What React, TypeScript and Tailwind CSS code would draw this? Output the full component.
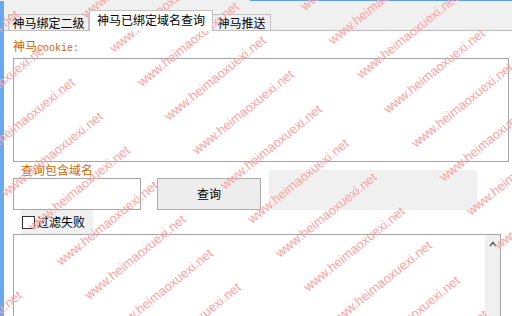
import React from 'react';

// watermark lattice, rotated grid of "www.heimaoxuexi.net"
const ANGLE = 39;
const STEP_ALONG = 175;
const STEP_ACROSS = 44;

const buildMarks = () => {
  const a = (ANGLE * Math.PI) / 180;
  const ux = Math.cos(a);
  const uy = -Math.sin(a);
  const nx = Math.sin(a);
  const ny = Math.cos(a);
  const out: { x: number; y: number }[] = [];
  for (let i = -5; i <= 5; i++) {
    for (let j = -14; j <= 14; j++) {
      const x = 326 + i * STEP_ALONG * ux + j * STEP_ACROSS * nx;
      const y = 215 + i * STEP_ALONG * uy + j * STEP_ACROSS * ny;
      if (x > -90 && x < 600 && y > -80 && y < 400) out.push({ x, y });
    }
  }
  return out;
};

const marks = buildMarks();

const App = () => {
  return (
    <div className="relative w-[512px] h-[316px] overflow-hidden bg-[#f0f0f0] flex flex-col font-['Noto_Sans_CJK_SC',sans-serif] text-[12px] text-black">
      {/* top edge of the window */}
      <div className="h-px flex justify-end">
        <div className="w-[262px] bg-[#5b9de8]" />
      </div>

      <div className="flex flex-1 min-h-0">
        <div className="w-[4px] bg-[#6aa8f0]" />

        <div className="flex-1 flex flex-col min-w-0">
          {/* tabs */}
          <div className="h-[29px] flex items-end pl-[4px]">
            <div className="w-[81px] h-[16px] border border-b-0 border-[#c3c3c3] bg-[#f0f0f0] flex items-center justify-center leading-none">
              神马绑定二级
            </div>
            <div className="relative z-10 -mb-px w-[124px] h-[21px] border border-b-0 border-[#c3c3c3] bg-white flex items-center justify-center leading-none pb-[2px]">
              神马已绑定域名查询
            </div>
            <div className="w-[58px] h-[16px] border border-b-0 border-l-0 border-[#c3c3c3] bg-[#f0f0f0] flex items-center justify-center leading-none">
              神马推送
            </div>
          </div>

          {/* tab page */}
          <div className="flex-1 bg-white border-t border-[#bcbcbc] pl-[9px] flex flex-col">
            <div className="mt-[8px] h-[14px] leading-[14px] text-[#cc6a00] flex items-baseline">
              <span>神马</span>
              <span className="font-['Liberation_Mono',monospace] text-[10px]">cookie:</span>
            </div>
            <div className="mt-[5px] w-[496px] h-[104px] border border-[#a5a5a5] bg-white" />

            <div className="h-[48px] flex items-end">
              <div className="flex flex-col">
                <div className="h-[16px] leading-[16px] pl-[8px] text-[#cc6a00]">查询包含域名</div>
                <div className="w-[128px] h-[32px] border border-[#a5a5a5] bg-white" />
              </div>
              <button className="ml-[16px] w-[104px] h-[32px] border border-[#adadad] bg-[#ededed] flex items-center justify-center leading-none">
                查询
              </button>
              <div className="ml-[8px] w-[208px] h-[40px] bg-[#f0f0f0]" />
            </div>

            <div className="ml-[8px] w-[72px] h-[24px] bg-[#f0f0f0] flex items-center">
              <div className="ml-[1px] w-[13px] h-[13px] border border-[#333333] bg-white" />
              <span className="ml-[2px] leading-none">过滤失败</span>
            </div>

            <div className="w-[488px] flex-1 border border-b-0 border-[#a5a5a5] bg-white flex justify-end">
              <div className="w-[15px] bg-[#f0f0f0] flex justify-center pt-[6px]">
                <svg width="8" height="6" viewBox="0 0 8 6">
                  <polyline points="1,5 4,1.5 7,5" fill="none" stroke="#606060" strokeWidth="1.6" />
                </svg>
              </div>
            </div>
          </div>
        </div>
      </div>

      {/* watermark overlay */}
      <div className="absolute inset-0 pointer-events-none overflow-hidden">
        {marks.map((m, k) => (
          <span
            key={k}
            className="absolute whitespace-nowrap font-['Liberation_Sans',sans-serif] text-[13px] leading-none text-[#ffa3a3]"
            style={{ left: m.x, top: m.y, transform: `translate(-50%, -50%) rotate(-${ANGLE}deg)` }}
          >
            www.heimaoxuexi.net
          </span>
        ))}
      </div>
    </div>
  );
};

export default App;
